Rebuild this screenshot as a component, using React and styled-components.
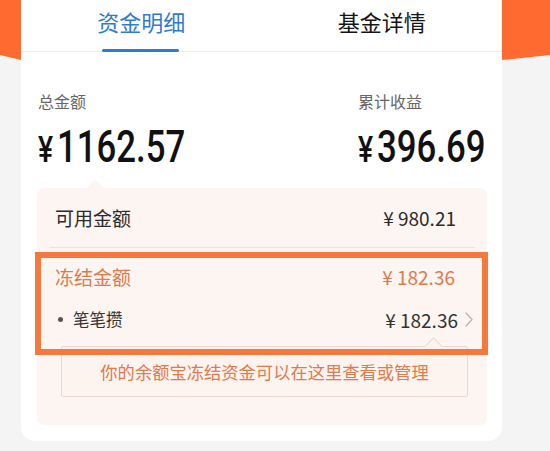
import React from 'react';
import styled, { createGlobalStyle } from 'styled-components';

const GlobalStyle = createGlobalStyle`
  html, body {
    margin: 0;
    padding: 0;
    background: #f4f4f4;
    font-family: "Noto Sans CJK SC", "Noto Sans", sans-serif;
  }
`;

const Page = styled.div`
  position: relative;
  width: 550px;
  height: 451px;
  overflow: hidden;
`;

// orange header band peeking out on both sides of the card
const Banner = styled.div`
  position: absolute;
  top: 0;
  left: 0;
  width: 550px;
  height: 61px;
  background: #ff6a30;
  clip-path: polygon(0 0, 100% 0, 100% 55px, 502px 60px, 21px 60px, 0 55px);
`;

const Card = styled.div`
  position: relative;
  margin-left: 21px;
  width: 481px;
  background: #fff;
  border-radius: 0 0 14px 14px;
  padding-bottom: 16px;
`;

const Tabs = styled.div`
  display: grid;
  grid-template-columns: 1fr 1fr;
  height: 51px;
  border-bottom: 1px solid #ececec;
`;

const Tab = styled.div`
  position: relative;
  display: flex;
  justify-content: center;
  padding-top: 7px;
  font-size: 22px;
  line-height: 28px;
  color: ${p => (p.active ? '#2f7ad3' : '#151515')};

  &::after {
    content: '';
    display: ${p => (p.active ? 'block' : 'none')};
    position: absolute;
    left: 50%;
    bottom: -1px;
    width: 77px;
    height: 3px;
    margin-left: -39px;
    border-radius: 2px;
    background: #2f7ad3;
  }
`;

const Summary = styled.div`
  display: grid;
  grid-template-columns: 320px 1fr;
  padding: 38px 17px 0;
`;

const Stat = styled.div`
  display: flex;
  flex-direction: column;
`;

const StatLabel = styled.div`
  font-size: 16px;
  line-height: 22px;
  color: #666;
`;

const StatValue = styled.div`
  display: flex;
  align-items: baseline;
  height: 44px;
  margin-top: 13px;
  font-family: Roboto, "Liberation Sans", sans-serif;
  font-weight: 500;
  font-size: 44px;
  line-height: 44px;
  color: #111;
  transform: scaleX(0.79);
  transform-origin: left center;

  span {
    font-size: 36px;
    margin-right: 5px;
  }
`;

const Panel = styled.div`
  position: relative;
  margin: 19px 15px 0 16px;
  padding-bottom: 28px;
  background: #fdf5f1;
  border-radius: 7px;

  &::before {
    content: '';
    position: absolute;
    top: -6px;
    left: 52px;
    width: 12px;
    height: 12px;
    background: #fdf5f1;
    transform: rotate(45deg);
  }
`;

const Row = styled.div`
  display: flex;
  align-items: center;
  justify-content: space-between;
  height: ${p => p.h}px;
  padding: 0 ${p => p.pr}px 0 ${p => p.pl}px;
  font-size: ${p => p.size}px;
  color: ${p => p.color};
`;

const Amount = styled.div`
  display: flex;
  align-items: center;
  font-size: 19px;
  color: inherit;

  svg {
    margin-left: 7px;
  }
`;

const Divider = styled.div`
  height: 1px;
  margin: 0 12px;
  background: #efe1da;
`;

const Highlight = styled.div`
  position: relative;
  z-index: 1;
  margin: 4px -1px 0 -2px;
  padding-bottom: 5px;
  border: 6px solid #f5793f;
`;

const Bullet = styled.div`
  display: flex;
  align-items: center;
  gap: 10px;

  &::before {
    content: '';
    width: 5px;
    height: 5px;
    border-radius: 50%;
    background: #555;
  }
`;

const Tip = styled.div`
  position: relative;
  margin: -9px 19px 0 24px;
  height: 49px;
  display: flex;
  align-items: center;
  justify-content: center;
  border: 1px solid #ead8cf;
  border-radius: 2px;
  background: #fdf4f0;
  font-size: 17.3px;
  color: #e17a4c;

  &::before {
    content: '';
    position: absolute;
    top: -7px;
    left: 365px;
    width: 12px;
    height: 12px;
    background: #fdf4f0;
    border-left: 1px solid #ead8cf;
    border-top: 1px solid #ead8cf;
    transform: rotate(45deg);
  }
`;

const Chevron = () => (
  <svg width="8" height="15" viewBox="0 0 8 15" fill="none">
    <path d="M1 1l6 6.5L1 14" stroke="#b8b8b8" strokeWidth="1.4" strokeLinecap="round" strokeLinejoin="round" />
  </svg>
);

export default function App() {
  return (
    <Page>
      <GlobalStyle />
      <Banner />
      <Card>
        <Tabs>
          <Tab active>资金明细</Tab>
          <Tab>基金详情</Tab>
        </Tabs>
        <Summary>
          <Stat>
            <StatLabel>总金额</StatLabel>
            <StatValue><span>¥</span>1162.57</StatValue>
          </Stat>
          <Stat>
            <StatLabel>累计收益</StatLabel>
            <StatValue><span>¥</span>396.69</StatValue>
          </Stat>
        </Summary>
        <Panel>
          <Row h={59} pl={18} pr={31} size={19} color="#2b2b2b">
            <span>可用金额</span>
            <Amount>¥ 980.21</Amount>
          </Row>
          <Divider />
          <Highlight>
            <Row h={36} pl={14} pr={27} size={19} color="#e07a4d">
              <span>冻结金额</span>
              <Amount>¥ 182.36</Amount>
            </Row>
            <Row h={50} pl={17} pr={9} size={16.5} color="#333">
              <Bullet>笔笔攒</Bullet>
              <Amount>¥ 182.36<Chevron /></Amount>
            </Row>
          </Highlight>
          <Tip>你的余额宝冻结资金可以在这里查看或管理</Tip>
        </Panel>
      </Card>
    </Page>
  );
}
